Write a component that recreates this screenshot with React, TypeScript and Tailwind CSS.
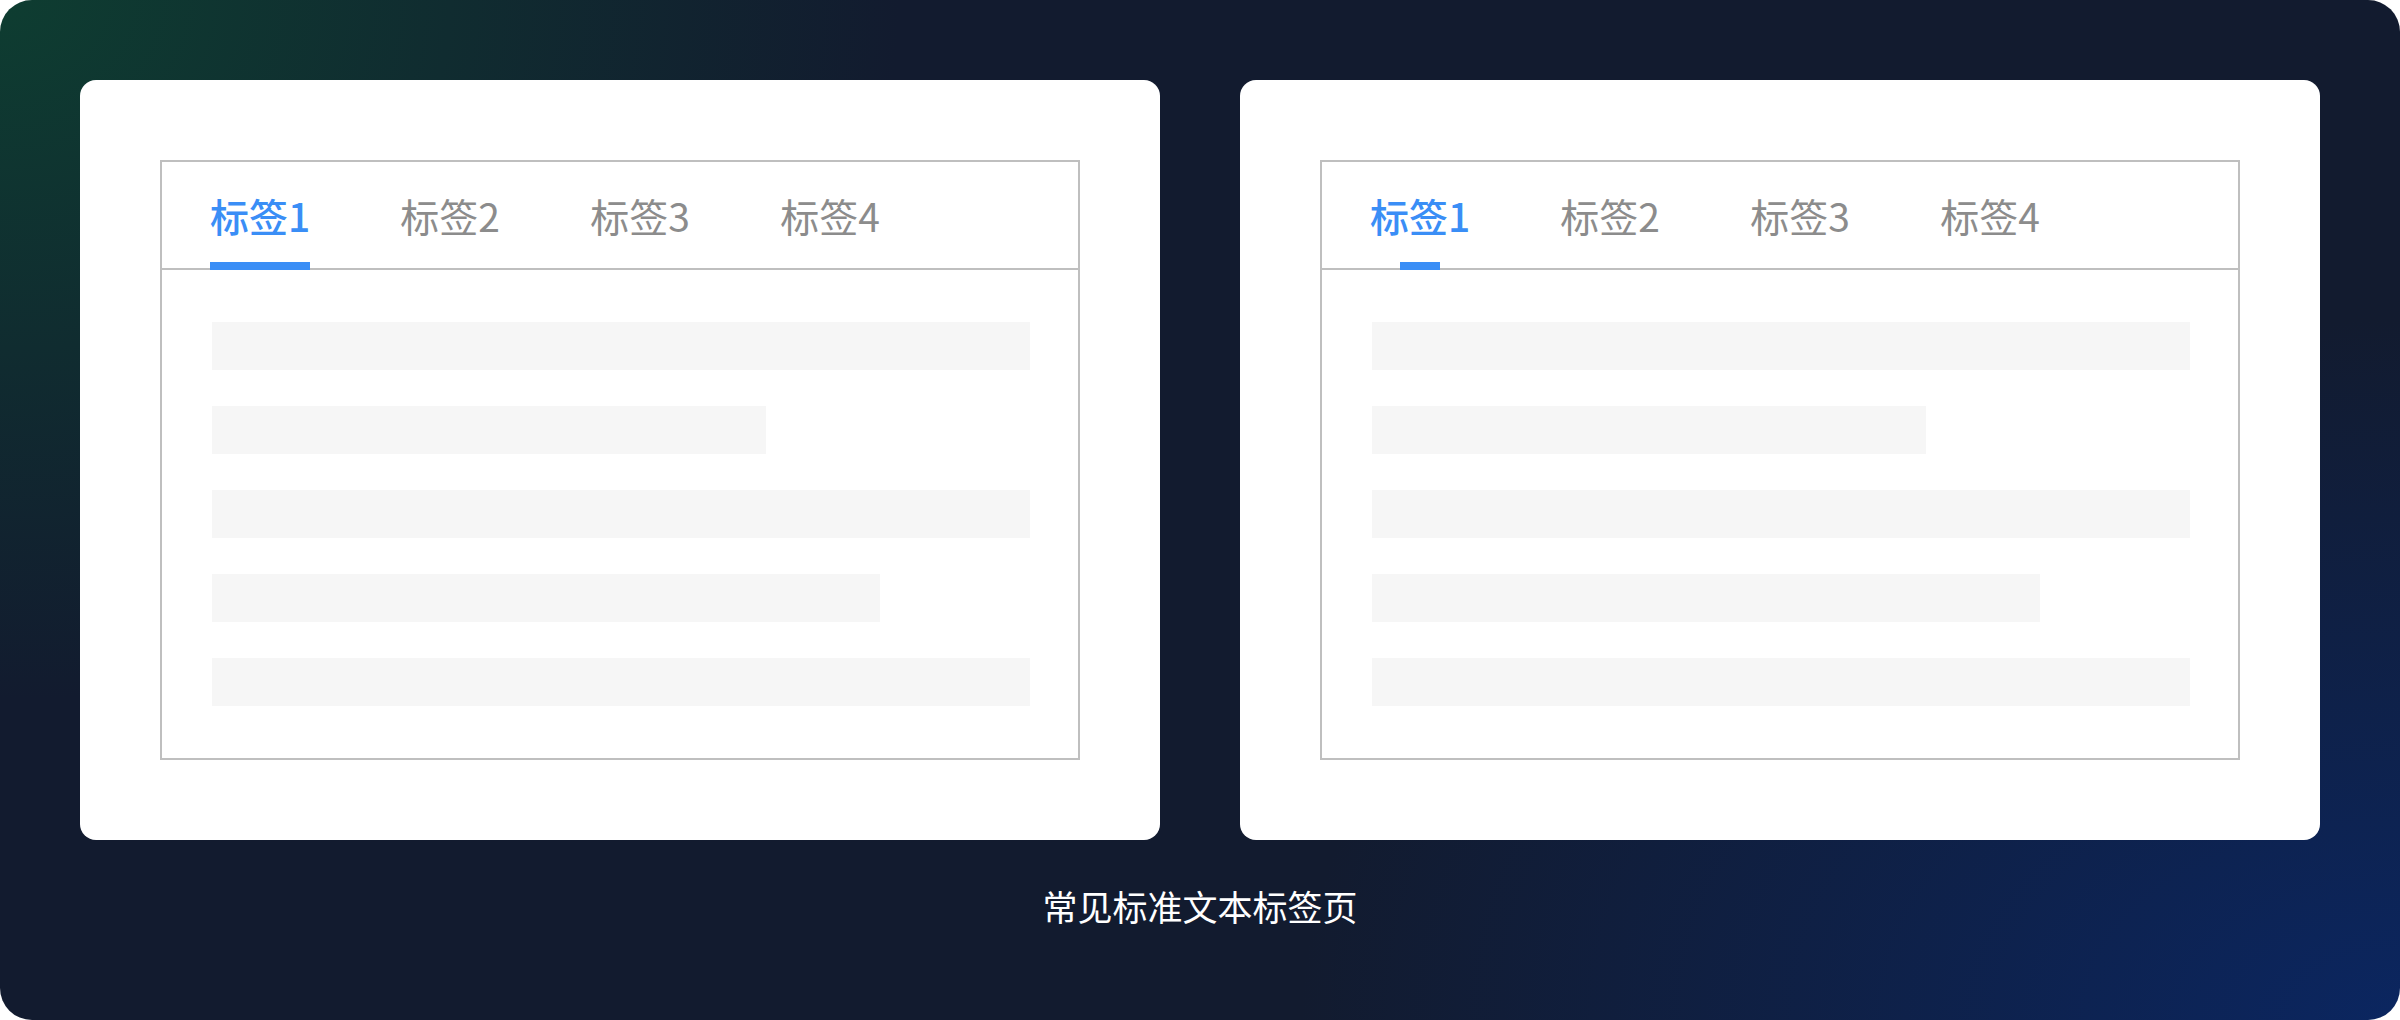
import React from 'react';

const tabs = ['标签1', '标签2', '标签3', '标签4'];

// skeleton line widths inside the tab panel
const lines = [818, 554, 818, 668, 818];

interface TabCardProps {
  indicator: 'full' | 'short';
}

function TabCard({ indicator }: TabCardProps) {
  return (
    <div className="flex h-[760px] w-[1080px] flex-col rounded-2xl bg-white p-20">
      <div className="flex flex-1 flex-col border-2 border-[#bfbfbf]">
        {/* Tab header */}
        <div className="flex h-[108px] gap-[90px] border-b-2 border-[#bfbfbf] pl-12">
          {tabs.map((label, i) => {
            const active = i === 0;
            return (
              <div key={label} className="relative flex w-[100px] flex-col items-center">
                <div className="flex flex-1 items-center">
                  <span
                    className={`whitespace-nowrap text-[39px] leading-none ${
                      active ? 'font-medium text-[#3a8ef6]' : 'text-[#8c8c8c]'
                    }`}
                  >
                    {label}
                  </span>
                </div>
                {active && (
                  <div
                    className={`absolute -bottom-[2px] h-2 bg-[#3a8ef6] ${
                      indicator === 'full' ? 'w-[100px]' : 'w-10'
                    }`}
                  />
                )}
              </div>
            );
          })}
        </div>

        {/* Panel placeholder lines */}
        <div className="flex flex-col gap-9 pl-[50px] pt-[52px]">
          {lines.map((w, i) => (
            <div key={i} className="h-12 bg-[#f6f6f6]" style={{ width: w }} />
          ))}
        </div>
      </div>
    </div>
  );
}

export default function App() {
  return (
    <div className="bg-white">
      <div
        className="flex h-[1020px] w-[2400px] flex-col items-center rounded-[32px] bg-[#121b2f] bg-[image:radial-gradient(ellipse_900px_700px_at_0%_0%,#0e3d31_0%,rgba(18,27,47,0)_100%),radial-gradient(ellipse_1100px_700px_at_100%_100%,#0b2660_0%,rgba(18,27,47,0)_100%)] p-20 pb-0"
        style={{ fontFamily: '"Noto Sans CJK SC", "Noto Sans", sans-serif' }}
      >
        <div className="flex gap-20">
          <TabCard indicator="full" />
          <TabCard indicator="short" />
        </div>
        <div className="mt-[40px] whitespace-nowrap text-[35px] leading-[52px] text-white">
          常见标准文本标签页
        </div>
      </div>
    </div>
  );
}
